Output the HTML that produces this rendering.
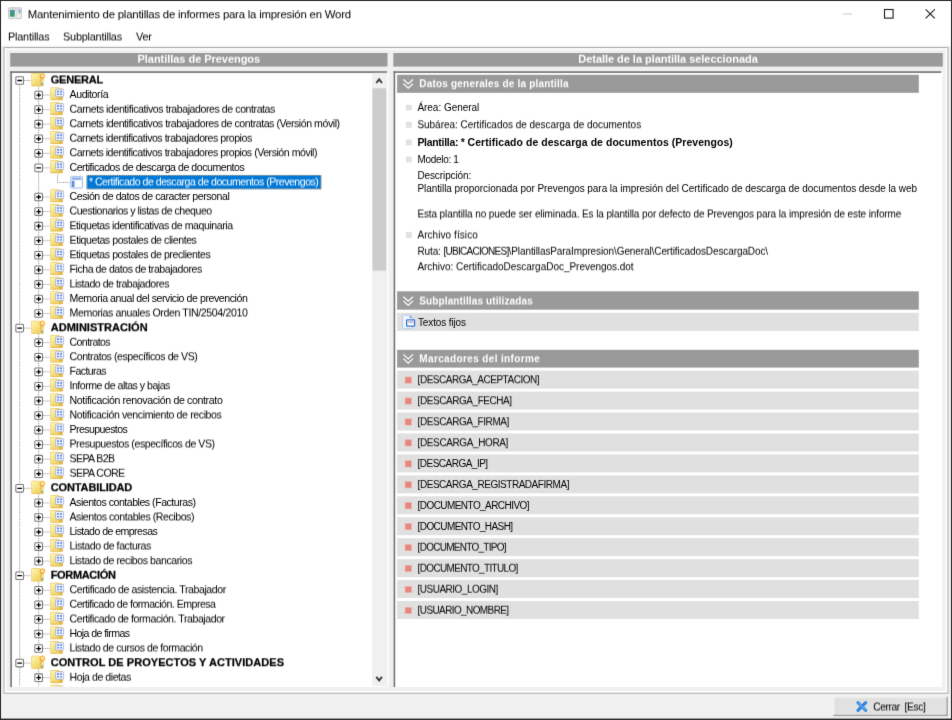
<!DOCTYPE html><html><head><meta charset="utf-8"><title>Mantenimiento de plantillas</title><style>
*{box-sizing:border-box;margin:0;padding:0}
html,body{width:952px;height:720px;overflow:hidden;background:#f0f0f0;font-family:"Liberation Sans",sans-serif;}
#win{filter:url(#bl);position:absolute;left:0;top:0;width:952px;height:720px;background:#f0f0f0;overflow:hidden}
#g{position:absolute;left:0;top:0}
#t{position:absolute;left:0;top:0;width:952px;height:720px}
#t div{position:absolute;white-space:pre;color:#000}
.f1{filter:url(#s1)}.f2{filter:url(#s2)}.f3{filter:url(#s3)}
#t .ti{font-size:11.4px;line-height:14px;font-weight:normal;letter-spacing:-0.217px}
#t .mn{font-size:10.9px;line-height:13px;font-weight:normal;letter-spacing:-0.22px}
#t .hb{font-size:11.0px;line-height:14px;font-weight:bold;letter-spacing:-0.04px;color:#fff;text-align:center}
#t .tt{font-size:10.6px;line-height:15px;font-weight:normal;letter-spacing:-0.455px;color:#000}
#t .rt{font-size:11.0px;line-height:15px;font-weight:bold;-webkit-text-stroke:0.22px #000}
#t .sh{font-size:10.0px;line-height:14px;font-weight:bold;color:#fff}
#t .dt{font-size:10.0px;line-height:12px;font-weight:normal;letter-spacing:-0.07px}
#t .db{font-size:10.45px;line-height:12px;font-weight:bold;letter-spacing:0.076px}
#t .mk{font-size:10.0px;line-height:12px;font-weight:normal;letter-spacing:-0.42px}
#t .bt{font-size:10.3px;line-height:13px;font-weight:normal;letter-spacing:-0.433px}
</style></head><body>
<div id="win">
<svg id="g" width="952" height="720" viewBox="0 0 952 720"><defs>
<filter id="bl" x="0" y="0" width="100%" height="100%" color-interpolation-filters="sRGB"><feConvolveMatrix order="3" kernelMatrix="0.0072 0.0706 0.0072 0.0706 0.6889 0.0706 0.0072 0.0706 0.0072" divisor="1" edgeMode="duplicate" preserveAlpha="true"/></filter>
<filter id="s1" x="-2%" y="-20%" width="104%" height="140%" color-interpolation-filters="sRGB"><feConvolveMatrix order="1 2" kernelMatrix="0.75 0.25" divisor="1" edgeMode="none" preserveAlpha="false"/></filter>
<filter id="s2" x="-2%" y="-20%" width="104%" height="140%" color-interpolation-filters="sRGB"><feConvolveMatrix order="1 2" kernelMatrix="0.5 0.5" divisor="1" edgeMode="none" preserveAlpha="false"/></filter>
<filter id="s3" x="-2%" y="-20%" width="104%" height="140%" color-interpolation-filters="sRGB"><feConvolveMatrix order="1 2" kernelMatrix="0.25 0.75" divisor="1" edgeMode="none" preserveAlpha="false"/></filter>
<linearGradient id="gf" x1="0" y1="0" x2="0.6" y2="1"><stop offset="0" stop-color="#fef8b2"/><stop offset="1" stop-color="#f0d468"/></linearGradient>
<linearGradient id="fd" x1="0" y1="0" x2="0" y2="1"><stop offset="0" stop-color="#fff"/><stop offset="1" stop-color="#f0f0f0"/></linearGradient>
<g id="fold">
  <path d="M0.4 1 Q0.4 0.3 1.1 0.3 L8.6 0.3 L9.4 1.2 L12 1.2 Q12.9 1.2 12.9 2.1 L12.9 12.2 Q12.9 13.1 12 13.1 L1.1 13.1 Q0.4 13.1 0.4 12.4 Z" fill="#e6b848"/>
  <path d="M0.9 1.2 Q0.9 0.8 1.4 0.8 L8.6 0.8 L8.9 1.3 L8.9 12.3 L1.4 12.3 Q0.9 12.3 0.9 11.8 Z" fill="url(#gf)"/>
  <rect x="5.6" y="1.9" width="8.0" height="7.6" rx="0.7" fill="#eef2fc" stroke="#a4adbf" stroke-width="0.75"/>
  <rect x="7.1" y="3.5" width="1.9" height="1.7" fill="#5a86f8"/><rect x="10.1" y="3.5" width="1.9" height="1.7" fill="#5a86f8"/>
  <rect x="7.1" y="6.4" width="1.9" height="1.3" fill="#5a86f8"/><rect x="10.1" y="6.4" width="1.9" height="1.3" fill="#5a86f8"/>
</g>
<g id="rfold">
  <path d="M0.4 1 Q0.4 0.3 1.1 0.3 L8.6 0.3 L9.6 1.6 L11.8 3 Q12.6 3.4 12.6 4.2 L12.6 12.6 Q12.6 13.5 11.7 13.5 L1.1 13.5 Q0.4 13.5 0.4 12.8 Z" fill="#e9bd4e"/>
  <path d="M0.9 1.2 Q0.9 0.8 1.4 0.8 L8.7 0.8 L9.2 1.5 L9.2 12.7 L1.4 12.7 Q0.9 12.7 0.9 12.2 Z" fill="url(#gf)"/>
  <path d="M11.35 5.5 L11.35 12.4" stroke="#ece6d6" stroke-width="1.1"/>
  <path d="M11.35 10.4 L11.35 12.3" stroke="#2fa2cc" stroke-width="1.2"/>
  <path d="M11.35 -0.6 L12.45 1.9 L14.8 3.1 L12.45 4.3 L11.35 6.9 L10.25 4.3 L7.9 3.1 L10.25 1.9 Z" fill="#f7a01a"/>
  <path d="M9.1 0.8 L13.6 5.4 M13.6 0.8 L9.1 5.4" stroke="#f8ad3a" stroke-width="1.1"/>
  <circle cx="11.35" cy="3.1" r="1.35" fill="#fff1bc"/>
</g>
<g id="form">
  <rect x="0.5" y="0.5" width="11.8" height="11.8" rx="1" fill="#eef3fb" stroke="#a3bfe8" stroke-width="1"/>
  <rect x="1.6" y="1.6" width="9.6" height="2.4" fill="#8fb3ea"/>
  <rect x="1.6" y="5" width="2.6" height="6.2" fill="#5d8fdc"/>
  <rect x="5.2" y="5" width="6" height="6.2" fill="#ffffff"/>
</g>
<g id="plus">
  <rect x="0.5" y="0.5" width="7.6" height="7.6" rx="0.8" fill="#fff" stroke="#767676" stroke-width="1.05"/>
  <path d="M2.0 4.3 H6.6 M4.3 2.0 V6.6" stroke="#000" stroke-width="1.3"/>
</g>
<g id="minus">
  <rect x="0.5" y="0.5" width="7.6" height="7.6" rx="0.8" fill="#fff" stroke="#767676" stroke-width="1.05"/>
  <path d="M2.0 4.3 H6.6" stroke="#000" stroke-width="1.3"/>
</g>
<g id="chev"><path d="M0.4 0.6 L5.2 5.1 L10 0.6 M0.4 4.8 L5.2 9.3 L10 4.8" fill="none" stroke="#fff" stroke-width="1.25"/></g>
<clipPath id="tc"><rect x="11.8" y="72.9" width="360" height="613.4"/></clipPath>
</defs>
<rect x="0.00" y="0.00" width="952.00" height="720.00" fill="#f0f0f0"/>
<rect x="0.00" y="0.00" width="952.00" height="45.20" fill="#ffffff"/>
<rect x="0.00" y="45.20" width="952.00" height="1.80" fill="url(#fd)"/>
<g transform="translate(8.1,7.3)"><rect x="0.45" y="0.45" width="12.9" height="10.9" rx="0.8" fill="#eeeeee" stroke="#c2c2c6" stroke-width="0.9"/><rect x="1" y="1" width="11.8" height="1.4" fill="#cfcfd4"/><rect x="1.8" y="2.8" width="4.8" height="6.6" fill="#3f9a7a"/><rect x="1.8" y="2.8" width="4.8" height="2.4" fill="#4a8fb0" opacity="0.7"/><rect x="7.6" y="2.6" width="1.6" height="7" fill="#dcdce0"/><rect x="10.4" y="2.6" width="2" height="2.4" fill="#6ea6d8"/><rect x="10.4" y="5" width="2" height="1.2" fill="#8fd08a"/></g>
<path d="M843 14 H852" stroke="#c8c8c8" stroke-width="1"/><rect x="884.5" y="9.5" width="8.6" height="8.6" fill="none" stroke="#1a1a1a" stroke-width="1.1"/><path d="M925.6 9.4 L934.8 18.4 M934.8 9.4 L925.6 18.4" stroke="#1a1a1a" stroke-width="1.1"/>
<rect x="4.1" y="47.6" width="943.8" height="645.5" fill="none" stroke="#a9a9a9" stroke-width="1.15"/>
<rect x="5.45" y="48.95" width="941.1" height="642.8" fill="none" stroke="#ffffff" stroke-width="1.5"/>
<rect x="10.20" y="53.00" width="377.30" height="13.60" fill="#9a9a9a"/>
<rect x="393.30" y="53.00" width="549.50" height="13.60" fill="#9a9a9a"/>
<rect x="10.30" y="71.25" width="378.10" height="615.80" fill="#ffffff"/>
<rect x="10.30" y="71.25" width="376.80" height="1.65" fill="#727272"/>
<rect x="10.30" y="71.25" width="1.60" height="615.80" fill="#727272"/>
<g clip-path="url(#tc)">
<path d="M19.65 80.50 L19.65 690.00" stroke="#8c8c8c" stroke-width="0.95" stroke-dasharray="0.91 0.91"/>
<path d="M38.65 86.50 L38.65 313.54" stroke="#8c8c8c" stroke-width="0.95" stroke-dasharray="0.91 0.91"/>
<path d="M38.65 334.11 L38.65 473.75" stroke="#8c8c8c" stroke-width="0.95" stroke-dasharray="0.91 0.91"/>
<path d="M38.65 494.32 L38.65 561.14" stroke="#8c8c8c" stroke-width="0.95" stroke-dasharray="0.91 0.91"/>
<path d="M38.65 581.71 L38.65 648.53" stroke="#8c8c8c" stroke-width="0.95" stroke-dasharray="0.91 0.91"/>
<path d="M38.65 669.10 L38.65 690.00" stroke="#8c8c8c" stroke-width="0.95" stroke-dasharray="0.91 0.91"/>
<path d="M24.00 80.50 L31.00 80.50" stroke="#8c8c8c" stroke-width="0.95" stroke-dasharray="0.91 0.91"/>
<use href="#minus" x="15.35" y="76.20"/>
<use href="#rfold" x="31.00" y="72.75"/>
<path d="M43.00 95.06 L50.00 95.06" stroke="#8c8c8c" stroke-width="0.95" stroke-dasharray="0.91 0.91"/>
<use href="#plus" x="34.35" y="90.77"/>
<use href="#fold" x="50.00" y="87.22"/>
<path d="M43.00 109.63 L50.00 109.63" stroke="#8c8c8c" stroke-width="0.95" stroke-dasharray="0.91 0.91"/>
<use href="#plus" x="34.35" y="105.33"/>
<use href="#fold" x="50.00" y="101.78"/>
<path d="M43.00 124.19 L50.00 124.19" stroke="#8c8c8c" stroke-width="0.95" stroke-dasharray="0.91 0.91"/>
<use href="#plus" x="34.35" y="119.89"/>
<use href="#fold" x="50.00" y="116.34"/>
<path d="M43.00 138.76 L50.00 138.76" stroke="#8c8c8c" stroke-width="0.95" stroke-dasharray="0.91 0.91"/>
<use href="#plus" x="34.35" y="134.46"/>
<use href="#fold" x="50.00" y="130.91"/>
<path d="M43.00 153.32 L50.00 153.32" stroke="#8c8c8c" stroke-width="0.95" stroke-dasharray="0.91 0.91"/>
<use href="#plus" x="34.35" y="149.02"/>
<use href="#fold" x="50.00" y="145.47"/>
<path d="M43.00 167.89 L50.00 167.89" stroke="#8c8c8c" stroke-width="0.95" stroke-dasharray="0.91 0.91"/>
<use href="#minus" x="34.35" y="163.59"/>
<use href="#fold" x="50.00" y="160.04"/>
<path d="M57.60 174.45 L57.60 182.45" stroke="#8c8c8c" stroke-width="0.95" stroke-dasharray="0.91 0.91"/>
<path d="M57.60 182.45 L70.00 182.45" stroke="#8c8c8c" stroke-width="0.95" stroke-dasharray="0.91 0.91"/>
<use href="#form" x="70.20" y="175.85"/>
<rect x="86.60" y="174.97" width="234.70" height="14.30" fill="#0078d7"/>
<rect x="87.05" y="175.42" width="233.8" height="13.4" fill="none" stroke="#f0b070" stroke-width="1" stroke-dasharray="0.91 0.91"/>
<path d="M43.00 197.02 L50.00 197.02" stroke="#8c8c8c" stroke-width="0.95" stroke-dasharray="0.91 0.91"/>
<use href="#plus" x="34.35" y="192.72"/>
<use href="#fold" x="50.00" y="189.17"/>
<path d="M43.00 211.59 L50.00 211.59" stroke="#8c8c8c" stroke-width="0.95" stroke-dasharray="0.91 0.91"/>
<use href="#plus" x="34.35" y="207.28"/>
<use href="#fold" x="50.00" y="203.74"/>
<path d="M43.00 226.15 L50.00 226.15" stroke="#8c8c8c" stroke-width="0.95" stroke-dasharray="0.91 0.91"/>
<use href="#plus" x="34.35" y="221.85"/>
<use href="#fold" x="50.00" y="218.30"/>
<path d="M43.00 240.72 L50.00 240.72" stroke="#8c8c8c" stroke-width="0.95" stroke-dasharray="0.91 0.91"/>
<use href="#plus" x="34.35" y="236.41"/>
<use href="#fold" x="50.00" y="232.87"/>
<path d="M43.00 255.28 L50.00 255.28" stroke="#8c8c8c" stroke-width="0.95" stroke-dasharray="0.91 0.91"/>
<use href="#plus" x="34.35" y="250.98"/>
<use href="#fold" x="50.00" y="247.43"/>
<path d="M43.00 269.85 L50.00 269.85" stroke="#8c8c8c" stroke-width="0.95" stroke-dasharray="0.91 0.91"/>
<use href="#plus" x="34.35" y="265.55"/>
<use href="#fold" x="50.00" y="262.00"/>
<path d="M43.00 284.41 L50.00 284.41" stroke="#8c8c8c" stroke-width="0.95" stroke-dasharray="0.91 0.91"/>
<use href="#plus" x="34.35" y="280.11"/>
<use href="#fold" x="50.00" y="276.56"/>
<path d="M43.00 298.98 L50.00 298.98" stroke="#8c8c8c" stroke-width="0.95" stroke-dasharray="0.91 0.91"/>
<use href="#plus" x="34.35" y="294.68"/>
<use href="#fold" x="50.00" y="291.12"/>
<path d="M43.00 313.54 L50.00 313.54" stroke="#8c8c8c" stroke-width="0.95" stroke-dasharray="0.91 0.91"/>
<use href="#plus" x="34.35" y="309.24"/>
<use href="#fold" x="50.00" y="305.69"/>
<path d="M24.00 328.11 L31.00 328.11" stroke="#8c8c8c" stroke-width="0.95" stroke-dasharray="0.91 0.91"/>
<use href="#minus" x="15.35" y="323.81"/>
<use href="#rfold" x="31.00" y="320.36"/>
<path d="M43.00 342.67 L50.00 342.67" stroke="#8c8c8c" stroke-width="0.95" stroke-dasharray="0.91 0.91"/>
<use href="#plus" x="34.35" y="338.37"/>
<use href="#fold" x="50.00" y="334.82"/>
<path d="M43.00 357.24 L50.00 357.24" stroke="#8c8c8c" stroke-width="0.95" stroke-dasharray="0.91 0.91"/>
<use href="#plus" x="34.35" y="352.94"/>
<use href="#fold" x="50.00" y="349.38"/>
<path d="M43.00 371.80 L50.00 371.80" stroke="#8c8c8c" stroke-width="0.95" stroke-dasharray="0.91 0.91"/>
<use href="#plus" x="34.35" y="367.50"/>
<use href="#fold" x="50.00" y="363.95"/>
<path d="M43.00 386.37 L50.00 386.37" stroke="#8c8c8c" stroke-width="0.95" stroke-dasharray="0.91 0.91"/>
<use href="#plus" x="34.35" y="382.06"/>
<use href="#fold" x="50.00" y="378.51"/>
<path d="M43.00 400.93 L50.00 400.93" stroke="#8c8c8c" stroke-width="0.95" stroke-dasharray="0.91 0.91"/>
<use href="#plus" x="34.35" y="396.63"/>
<use href="#fold" x="50.00" y="393.08"/>
<path d="M43.00 415.50 L50.00 415.50" stroke="#8c8c8c" stroke-width="0.95" stroke-dasharray="0.91 0.91"/>
<use href="#plus" x="34.35" y="411.19"/>
<use href="#fold" x="50.00" y="407.64"/>
<path d="M43.00 430.06 L50.00 430.06" stroke="#8c8c8c" stroke-width="0.95" stroke-dasharray="0.91 0.91"/>
<use href="#plus" x="34.35" y="425.76"/>
<use href="#fold" x="50.00" y="422.21"/>
<path d="M43.00 444.62 L50.00 444.62" stroke="#8c8c8c" stroke-width="0.95" stroke-dasharray="0.91 0.91"/>
<use href="#plus" x="34.35" y="440.32"/>
<use href="#fold" x="50.00" y="436.77"/>
<path d="M43.00 459.19 L50.00 459.19" stroke="#8c8c8c" stroke-width="0.95" stroke-dasharray="0.91 0.91"/>
<use href="#plus" x="34.35" y="454.89"/>
<use href="#fold" x="50.00" y="451.34"/>
<path d="M43.00 473.75 L50.00 473.75" stroke="#8c8c8c" stroke-width="0.95" stroke-dasharray="0.91 0.91"/>
<use href="#plus" x="34.35" y="469.45"/>
<use href="#fold" x="50.00" y="465.90"/>
<path d="M24.00 488.32 L31.00 488.32" stroke="#8c8c8c" stroke-width="0.95" stroke-dasharray="0.91 0.91"/>
<use href="#minus" x="15.35" y="484.02"/>
<use href="#rfold" x="31.00" y="480.57"/>
<path d="M43.00 502.88 L50.00 502.88" stroke="#8c8c8c" stroke-width="0.95" stroke-dasharray="0.91 0.91"/>
<use href="#plus" x="34.35" y="498.58"/>
<use href="#fold" x="50.00" y="495.03"/>
<path d="M43.00 517.45 L50.00 517.45" stroke="#8c8c8c" stroke-width="0.95" stroke-dasharray="0.91 0.91"/>
<use href="#plus" x="34.35" y="513.15"/>
<use href="#fold" x="50.00" y="509.60"/>
<path d="M43.00 532.01 L50.00 532.01" stroke="#8c8c8c" stroke-width="0.95" stroke-dasharray="0.91 0.91"/>
<use href="#plus" x="34.35" y="527.72"/>
<use href="#fold" x="50.00" y="524.16"/>
<path d="M43.00 546.58 L50.00 546.58" stroke="#8c8c8c" stroke-width="0.95" stroke-dasharray="0.91 0.91"/>
<use href="#plus" x="34.35" y="542.28"/>
<use href="#fold" x="50.00" y="538.73"/>
<path d="M43.00 561.14 L50.00 561.14" stroke="#8c8c8c" stroke-width="0.95" stroke-dasharray="0.91 0.91"/>
<use href="#plus" x="34.35" y="556.85"/>
<use href="#fold" x="50.00" y="553.29"/>
<path d="M24.00 575.71 L31.00 575.71" stroke="#8c8c8c" stroke-width="0.95" stroke-dasharray="0.91 0.91"/>
<use href="#minus" x="15.35" y="571.41"/>
<use href="#rfold" x="31.00" y="567.96"/>
<path d="M43.00 590.27 L50.00 590.27" stroke="#8c8c8c" stroke-width="0.95" stroke-dasharray="0.91 0.91"/>
<use href="#plus" x="34.35" y="585.98"/>
<use href="#fold" x="50.00" y="582.42"/>
<path d="M43.00 604.84 L50.00 604.84" stroke="#8c8c8c" stroke-width="0.95" stroke-dasharray="0.91 0.91"/>
<use href="#plus" x="34.35" y="600.54"/>
<use href="#fold" x="50.00" y="596.99"/>
<path d="M43.00 619.40 L50.00 619.40" stroke="#8c8c8c" stroke-width="0.95" stroke-dasharray="0.91 0.91"/>
<use href="#plus" x="34.35" y="615.11"/>
<use href="#fold" x="50.00" y="611.55"/>
<path d="M43.00 633.97 L50.00 633.97" stroke="#8c8c8c" stroke-width="0.95" stroke-dasharray="0.91 0.91"/>
<use href="#plus" x="34.35" y="629.67"/>
<use href="#fold" x="50.00" y="626.12"/>
<path d="M43.00 648.53 L50.00 648.53" stroke="#8c8c8c" stroke-width="0.95" stroke-dasharray="0.91 0.91"/>
<use href="#plus" x="34.35" y="644.24"/>
<use href="#fold" x="50.00" y="640.68"/>
<path d="M24.00 663.10 L31.00 663.10" stroke="#8c8c8c" stroke-width="0.95" stroke-dasharray="0.91 0.91"/>
<use href="#minus" x="15.35" y="658.80"/>
<use href="#rfold" x="31.00" y="655.35"/>
<path d="M43.00 677.66 L50.00 677.66" stroke="#8c8c8c" stroke-width="0.95" stroke-dasharray="0.91 0.91"/>
<use href="#plus" x="34.35" y="673.37"/>
<use href="#fold" x="50.00" y="669.81"/>
<path d="M43.00 692.23 L50.00 692.23" stroke="#8c8c8c" stroke-width="0.95" stroke-dasharray="0.91 0.91"/>
<use href="#plus" x="34.35" y="687.93"/>
<use href="#fold" x="50.00" y="684.38"/>
</g>
<rect x="372.10" y="72.85" width="15.00" height="613.30" fill="#f0f0f0"/>
<rect x="372.50" y="88.30" width="13.70" height="182.30" fill="#cdcdcd"/>
<path d="M376.3 83.0 L379.15 79.4 L382.0 83.0" fill="none" stroke="#3c3c3c" stroke-width="1.9"/>
<path d="M376.3 676.8 L379.15 680.4 L382.0 676.8" fill="none" stroke="#3c3c3c" stroke-width="1.9"/>
<rect x="393.60" y="71.25" width="548.70" height="615.80" fill="#ffffff"/>
<rect x="393.60" y="71.25" width="547.60" height="1.65" fill="#727272"/>
<rect x="393.60" y="71.25" width="1.60" height="615.80" fill="#727272"/>
<rect x="397.10" y="74.80" width="521.70" height="18.00" fill="#9a9a9a"/>
<use href="#chev" x="403.00" y="78.90"/>
<rect x="406.3" y="105.10" width="4.9" height="4.9" fill="#e2e2e6" stroke="#d6d6db" stroke-width="0.6"/>
<rect x="406.3" y="122.40" width="4.9" height="4.9" fill="#e2e2e6" stroke="#d6d6db" stroke-width="0.6"/>
<rect x="406.3" y="140.00" width="4.9" height="4.9" fill="#e2e2e6" stroke="#d6d6db" stroke-width="0.6"/>
<rect x="406.3" y="157.00" width="4.9" height="4.9" fill="#e2e2e6" stroke="#d6d6db" stroke-width="0.6"/>
<rect x="406.3" y="232.60" width="4.9" height="4.9" fill="#e2e2e6" stroke="#d6d6db" stroke-width="0.6"/>
<rect x="397.10" y="291.30" width="521.70" height="18.40" fill="#9a9a9a"/>
<use href="#chev" x="403.00" y="296.10"/>
<rect x="397.10" y="312.80" width="521.70" height="18.20" fill="#e0e0e0"/>
<g transform="translate(401.6,314.4)"><path d="M1 0.8 H8 L10.8 3.6 V14 H1 Z" fill="#f2f6fe" stroke="#b4c8ee" stroke-width="0.9"/><path d="M8 0.8 V3.6 H10.8 Z" fill="#5f95e6"/><rect x="5.0" y="5.6" width="8.0" height="6.2" rx="0.8" fill="#fbfcff" stroke="#2f74d8" stroke-width="1.25"/><rect x="6.2" y="7.0" width="1.6" height="1.5" fill="#f2b43c"/><rect x="8.2" y="7.0" width="1.6" height="1.5" fill="#5ab0f0"/><rect x="10.2" y="7.0" width="1.6" height="1.5" fill="#f07a9a"/></g>
<rect x="397.10" y="349.80" width="521.70" height="17.80" fill="#9a9a9a"/>
<use href="#chev" x="403.00" y="353.80"/>
<rect x="397.10" y="370.65" width="521.70" height="18.00" fill="#e0e0e0"/>
<rect x="405.1" y="377.00" width="6.4" height="6.2" fill="#e8857c" stroke="#ecb0a8" stroke-width="0.6"/>
<rect x="397.10" y="391.59" width="521.70" height="18.00" fill="#e0e0e0"/>
<rect x="405.1" y="397.94" width="6.4" height="6.2" fill="#e8857c" stroke="#ecb0a8" stroke-width="0.6"/>
<rect x="397.10" y="412.53" width="521.70" height="18.00" fill="#e0e0e0"/>
<rect x="405.1" y="418.88" width="6.4" height="6.2" fill="#e8857c" stroke="#ecb0a8" stroke-width="0.6"/>
<rect x="397.10" y="433.47" width="521.70" height="18.00" fill="#e0e0e0"/>
<rect x="405.1" y="439.82" width="6.4" height="6.2" fill="#e8857c" stroke="#ecb0a8" stroke-width="0.6"/>
<rect x="397.10" y="454.41" width="521.70" height="18.00" fill="#e0e0e0"/>
<rect x="405.1" y="460.76" width="6.4" height="6.2" fill="#e8857c" stroke="#ecb0a8" stroke-width="0.6"/>
<rect x="397.10" y="475.35" width="521.70" height="18.00" fill="#e0e0e0"/>
<rect x="405.1" y="481.70" width="6.4" height="6.2" fill="#e8857c" stroke="#ecb0a8" stroke-width="0.6"/>
<rect x="397.10" y="496.29" width="521.70" height="18.00" fill="#e0e0e0"/>
<rect x="405.1" y="502.64" width="6.4" height="6.2" fill="#e8857c" stroke="#ecb0a8" stroke-width="0.6"/>
<rect x="397.10" y="517.23" width="521.70" height="18.00" fill="#e0e0e0"/>
<rect x="405.1" y="523.58" width="6.4" height="6.2" fill="#e8857c" stroke="#ecb0a8" stroke-width="0.6"/>
<rect x="397.10" y="538.17" width="521.70" height="18.00" fill="#e0e0e0"/>
<rect x="405.1" y="544.52" width="6.4" height="6.2" fill="#e8857c" stroke="#ecb0a8" stroke-width="0.6"/>
<rect x="397.10" y="559.11" width="521.70" height="18.00" fill="#e0e0e0"/>
<rect x="405.1" y="565.46" width="6.4" height="6.2" fill="#e8857c" stroke="#ecb0a8" stroke-width="0.6"/>
<rect x="397.10" y="580.05" width="521.70" height="18.00" fill="#e0e0e0"/>
<rect x="405.1" y="586.40" width="6.4" height="6.2" fill="#e8857c" stroke="#ecb0a8" stroke-width="0.6"/>
<rect x="397.10" y="600.99" width="521.70" height="18.00" fill="#e0e0e0"/>
<rect x="405.1" y="607.34" width="6.4" height="6.2" fill="#e8857c" stroke="#ecb0a8" stroke-width="0.6"/>
<rect x="833.20" y="696.60" width="114.60" height="19.50" fill="#e1e1e1"/>
<rect x="833.20" y="696.60" width="114.60" height="1.00" fill="#f8f8f8"/>
<rect x="833.20" y="696.60" width="1.00" height="19.50" fill="#f8f8f8"/>
<rect x="833.20" y="714.80" width="114.60" height="1.30" fill="#a0a0a0"/>
<rect x="946.50" y="696.60" width="1.30" height="19.50" fill="#a0a0a0"/>
<g transform="translate(855.7,700.2)"><path d="M2.3 2.4 L10 10.2 M10 2.4 L2.3 10.2" stroke="#2f86de" stroke-width="3.1" stroke-linecap="round"/><path d="M2.6 2.5 L9.6 9.6" stroke="#6ab4f4" stroke-width="1.1" stroke-linecap="round"/></g>
<rect x="0" y="0" width="952" height="1" fill="#262626"/><rect x="0" y="0" width="1" height="720" fill="#262626"/><rect x="951" y="0" width="1" height="720" fill="#262626"/><rect x="0" y="718.6" width="952" height="1.4" fill="#262626"/>
</svg>
<div id="t">
<div class="ti f1" style="left:27.70px;top:7px;">Mantenimiento de plantillas de informes para la impresión en Word</div>
<div class="mn f2" style="left:8.00px;top:30px;">Plantillas</div>
<div class="mn f2" style="left:63.00px;top:30px;">Subplantillas</div>
<div class="mn f2" style="left:136.00px;top:30px;">Ver</div>
<div class="hb f3" style="left:10.20px;top:51px;width:377.3px">Plantillas de Prevengos</div>
<div class="hb f3" style="left:393.30px;top:51px;width:549.5px">Detalle de la plantilla seleccionada</div>
<div class="rt f2" style="left:50.70px;top:72px;letter-spacing:-0.2px">GENERAL</div>
<div class="tt" style="left:69.50px;top:87px;letter-spacing:-0.413px">Auditoría</div>
<div class="tt f3" style="left:69.50px;top:101px;letter-spacing:-0.434px">Carnets identificativos trabajadores de contratas</div>
<div class="tt f1" style="left:69.50px;top:116px;letter-spacing:-0.455px">Carnets identificativos trabajadores de contratas (Versión móvil)</div>
<div class="tt f3" style="left:69.50px;top:130px;letter-spacing:-0.476px">Carnets identificativos trabajadores propios</div>
<div class="tt f1" style="left:69.50px;top:145px;letter-spacing:-0.477px">Carnets identificativos trabajadores propios (Versión móvil)</div>
<div class="tt" style="left:69.50px;top:160px;letter-spacing:-0.467px">Certificados de descarga de documentos</div>
<div class="tt f2" style="left:88.90px;top:174px;color:#fff;letter-spacing:-0.5px">* Certificado de descarga de documentos (Prevengos)</div>
<div class="tt" style="left:69.50px;top:189px;letter-spacing:-0.451px">Cesión de datos de caracter personal</div>
<div class="tt f2" style="left:69.50px;top:203px;letter-spacing:-0.491px">Cuestionarios y listas de chequeo</div>
<div class="tt f1" style="left:69.50px;top:218px;letter-spacing:-0.453px">Etiquetas identificativas de maquinaria</div>
<div class="tt f3" style="left:69.50px;top:232px;letter-spacing:-0.44px">Etiquetas postales de clientes</div>
<div class="tt f1" style="left:69.50px;top:247px;letter-spacing:-0.446px">Etiquetas postales de preclientes</div>
<div class="tt f3" style="left:69.50px;top:261px;letter-spacing:-0.461px">Ficha de datos de trabajadores</div>
<div class="tt f2" style="left:69.50px;top:276px;letter-spacing:-0.488px">Listado de trabajadores</div>
<div class="tt" style="left:69.50px;top:291px;letter-spacing:-0.441px">Memoria anual del servicio de prevención</div>
<div class="tt f2" style="left:69.50px;top:305px;letter-spacing:-0.385px">Memorias anuales Orden TIN/2504/2010</div>
<div class="rt f1" style="left:50.70px;top:320px;letter-spacing:0.026px">ADMINISTRACIÓN</div>
<div class="tt f3" style="left:69.50px;top:334px;letter-spacing:-0.6px">Contratos</div>
<div class="tt f1" style="left:69.50px;top:349px;letter-spacing:-0.444px">Contratos (específicos de VS)</div>
<div class="tt f3" style="left:69.50px;top:363px;letter-spacing:-0.588px">Facturas</div>
<div class="tt f1" style="left:69.50px;top:378px;letter-spacing:-0.504px">Informe de altas y bajas</div>
<div class="tt" style="left:69.50px;top:393px;letter-spacing:-0.358px">Notificación renovación de contrato</div>
<div class="tt f2" style="left:69.50px;top:407px;letter-spacing:-0.402px">Notificación vencimiento de recibos</div>
<div class="tt" style="left:69.50px;top:422px;letter-spacing:-0.589px">Presupuestos</div>
<div class="tt f2" style="left:69.50px;top:436px;letter-spacing:-0.451px">Presupuestos (específicos de VS)</div>
<div class="tt f1" style="left:69.50px;top:451px;letter-spacing:-0.6px">SEPA B2B</div>
<div class="tt f3" style="left:69.50px;top:465px;letter-spacing:-0.6px">SEPA CORE</div>
<div class="rt f1" style="left:50.70px;top:480px;letter-spacing:-0.118px">CONTABILIDAD</div>
<div class="tt" style="left:69.50px;top:495px;letter-spacing:-0.487px">Asientos contables (Facturas)</div>
<div class="tt f2" style="left:69.50px;top:509px;letter-spacing:-0.452px">Asientos contables (Recibos)</div>
<div class="tt" style="left:69.50px;top:524px;letter-spacing:-0.559px">Listado de empresas</div>
<div class="tt f2" style="left:69.50px;top:538px;letter-spacing:-0.429px">Listado de facturas</div>
<div class="tt f1" style="left:69.50px;top:553px;letter-spacing:-0.439px">Listado de recibos bancarios</div>
<div class="rt f3" style="left:50.70px;top:567px;letter-spacing:-0.33px">FORMACIÓN</div>
<div class="tt f1" style="left:69.50px;top:582px;letter-spacing:-0.421px">Certificado de asistencia. Trabajador</div>
<div class="tt f3" style="left:69.50px;top:596px;letter-spacing:-0.519px">Certificado de formación. Empresa</div>
<div class="tt f2" style="left:69.50px;top:611px;letter-spacing:-0.45px">Certificado de formación. Trabajador</div>
<div class="tt" style="left:69.50px;top:626px;letter-spacing:-0.592px">Hoja de firmas</div>
<div class="tt f2" style="left:69.50px;top:640px;letter-spacing:-0.47px">Listado de cursos de formación</div>
<div class="rt f1" style="left:50.70px;top:655px;letter-spacing:0.05px">CONTROL DE PROYECTOS Y ACTIVIDADES</div>
<div class="tt f3" style="left:69.50px;top:669px;letter-spacing:-0.456px">Hoja de dietas</div>
<div class="sh f1" style="left:419.30px;top:77px;letter-spacing:0.197px">Datos generales de la plantilla</div>
<div class="dt" style="left:417.40px;top:102px;letter-spacing:-0.03px">Área: General</div>
<div class="dt f1" style="left:417.40px;top:119px;letter-spacing:-0.03px">Subárea: Certificados de descarga de documentos</div>
<div class="db" style="left:417.40px;top:137px;"><span style="letter-spacing:-0.27px">Plantilla: *</span> Certificado de descarga de documentos (Prevengos)</div>
<div class="dt" style="left:417.40px;top:154px;letter-spacing:-0.3px">Modelo: 1</div>
<div class="dt" style="left:417.40px;top:170px;letter-spacing:-0.1px">Descripción:</div>
<div class="dt" style="left:417.40px;top:183px;letter-spacing:-0.062px">Plantilla proporcionada por Prevengos para la impresión del Certificado de descarga de documentos desde la web</div>
<div class="dt f2" style="left:417.40px;top:208px;letter-spacing:-0.111px">Esta plantilla no puede ser eliminada. Es la plantilla por defecto de Prevengos para la impresión de este informe</div>
<div class="dt f2" style="left:417.40px;top:229px;letter-spacing:0.07px">Archivo físico</div>
<div class="dt f3" style="left:417.40px;top:245px;letter-spacing:-0.1px">Ruta: <span style="letter-spacing:-0.72px">[UBICACIONES]</span>\PlantillasParaImpresion\General\CertificadosDescargaDoc\</div>
<div class="dt f1" style="left:417.40px;top:261px;letter-spacing:-0.025px">Archivo: CertificadoDescargaDoc_Prevengos.dot</div>
<div class="sh f2" style="left:419.30px;top:294px;letter-spacing:0.123px">Subplantillas utilizadas</div>
<div class="mk" style="left:418.00px;top:317px;letter-spacing:-0.134px">Textos fijos</div>
<div class="sh f1" style="left:419.30px;top:352px;letter-spacing:0.366px">Marcadores del informe</div>
<div class="mk f1" style="left:417.60px;top:374px;letter-spacing:-0.478px">[DESCARGA_ACEPTACION]</div>
<div class="mk f1" style="left:417.60px;top:395px;letter-spacing:-0.443px">[DESCARGA_FECHA]</div>
<div class="mk f1" style="left:417.60px;top:416px;letter-spacing:-0.444px">[DESCARGA_FIRMA]</div>
<div class="mk f1" style="left:417.60px;top:437px;letter-spacing:-0.385px">[DESCARGA_HORA]</div>
<div class="mk" style="left:417.60px;top:458px;letter-spacing:-0.517px">[DESCARGA_IP]</div>
<div class="mk" style="left:417.60px;top:479px;letter-spacing:-0.462px">[DESCARGA_REGISTRADAFIRMA]</div>
<div class="mk" style="left:417.60px;top:500px;letter-spacing:-0.565px">[DOCUMENTO_ARCHIVO]</div>
<div class="mk" style="left:417.60px;top:521px;letter-spacing:-0.585px">[DOCUMENTO_HASH]</div>
<div class="mk f3" style="left:417.60px;top:541px;letter-spacing:-0.729px">[DOCUMENTO_TIPO]</div>
<div class="mk f3" style="left:417.60px;top:562px;letter-spacing:-0.662px">[DOCUMENTO_TITULO]</div>
<div class="mk f3" style="left:417.60px;top:583px;letter-spacing:-0.508px">[USUARIO_LOGIN]</div>
<div class="mk f3" style="left:417.60px;top:604px;letter-spacing:-0.605px">[USUARIO_NOMBRE]</div>
<div class="bt f2" style="left:873.20px;top:700px;">Cerrar  [Esc]</div>
</div>
</div></body></html>
